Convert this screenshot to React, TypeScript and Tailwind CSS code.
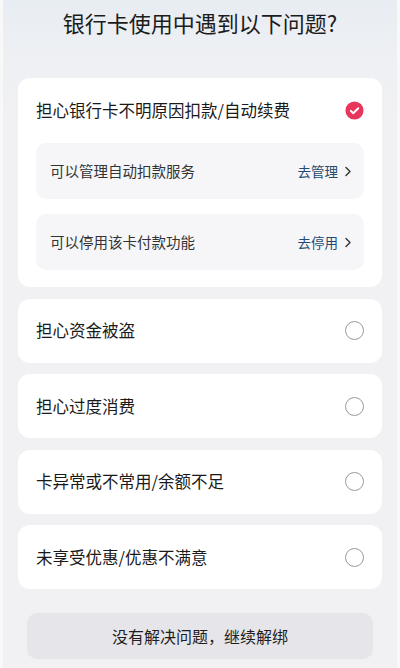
import React from "react";

const options = [
  "担心资金被盗",
  "担心过度消费",
  "卡异常或不常用/余额不足",
  "未享受优惠/优惠不满意",
];

const actions = [
  { label: "可以管理自动扣款服务", action: "去管理" },
  { label: "可以停用该卡付款功能", action: "去停用" },
];

function CheckedIcon() {
  return (
    <svg width="19" height="19" viewBox="0 0 20 20">
      <circle cx="10" cy="10" r="9.5" fill="#e8365a" />
      <path
        d="M6 10.3l2.7 2.6L14 7.6"
        fill="none"
        stroke="#fff"
        strokeWidth="2"
        strokeLinecap="round"
        strokeLinejoin="round"
      />
    </svg>
  );
}

function EmptyIcon() {
  return <div className="h-[19px] w-[19px] rounded-full border-[1.5px] border-[#9a9a9a]" />;
}

export default function App() {
  return (
    <main
      className="min-h-screen border-x-[3px] border-[#f8f8f9] bg-[linear-gradient(180deg,#e8edf3_0px,#eef0f3_60px,#f1f1f3_120px)] px-[15px] pb-[10px] text-[#1a1a1a]"
      style={{ fontFamily: '"Noto Sans CJK SC", "Noto Sans", sans-serif' }}
    >
      {/* Header */}
      <h1 className="pt-[6px] text-center text-[22px] leading-[32px] font-normal text-[#1c1c1c]">
        银行卡使用中遇到以下问题?
      </h1>

      <div className="mt-[40px] flex flex-col gap-[11.5px]">
        {/* Selected card */}
        <div className="rounded-[12px] bg-white px-[18px] pt-[20px] pb-[17px]">
          <div className="flex h-[24px] items-center justify-between">
            <span className="text-[16.5px] leading-[24px]">担心银行卡不明原因扣款/自动续费</span>
            <CheckedIcon />
          </div>
          <div className="mt-[21px] flex flex-col gap-[15px]">
            {actions.map((a) => (
              <div
                key={a.action}
                className="flex h-[56px] items-center justify-between rounded-[10px] bg-[#f6f6f8] pr-[12px] pl-[14px]"
              >
                <span className="text-[14.5px] text-[#333]">{a.label}</span>
                <span className="flex items-center gap-[6px] text-[13.5px] text-[#234a6e]">
                  {a.action}
                  <svg width="8" height="11" viewBox="0 0 8 11">
                    <path
                      d="M2 1.5l4 4-4 4"
                      fill="none"
                      stroke="#333"
                      strokeWidth="1.4"
                      strokeLinecap="round"
                      strokeLinejoin="round"
                    />
                  </svg>
                </span>
              </div>
            ))}
          </div>
        </div>

        {options.map((o) => (
          <div
            key={o}
            className="flex h-[64px] items-center justify-between rounded-[12px] bg-white px-[18px]"
          >
            <span className="text-[16.5px]">{o}</span>
            <EmptyIcon />
          </div>
        ))}
      </div>

      {/* Footer button */}
      <button className="mx-[9px] mt-[24px] flex h-[46px] w-[346px] items-center justify-center rounded-[10px] bg-[#e6e6ea] text-[16px] text-[#1f1f1f]">
        没有解决问题，继续解绑
      </button>
    </main>
  );
}
